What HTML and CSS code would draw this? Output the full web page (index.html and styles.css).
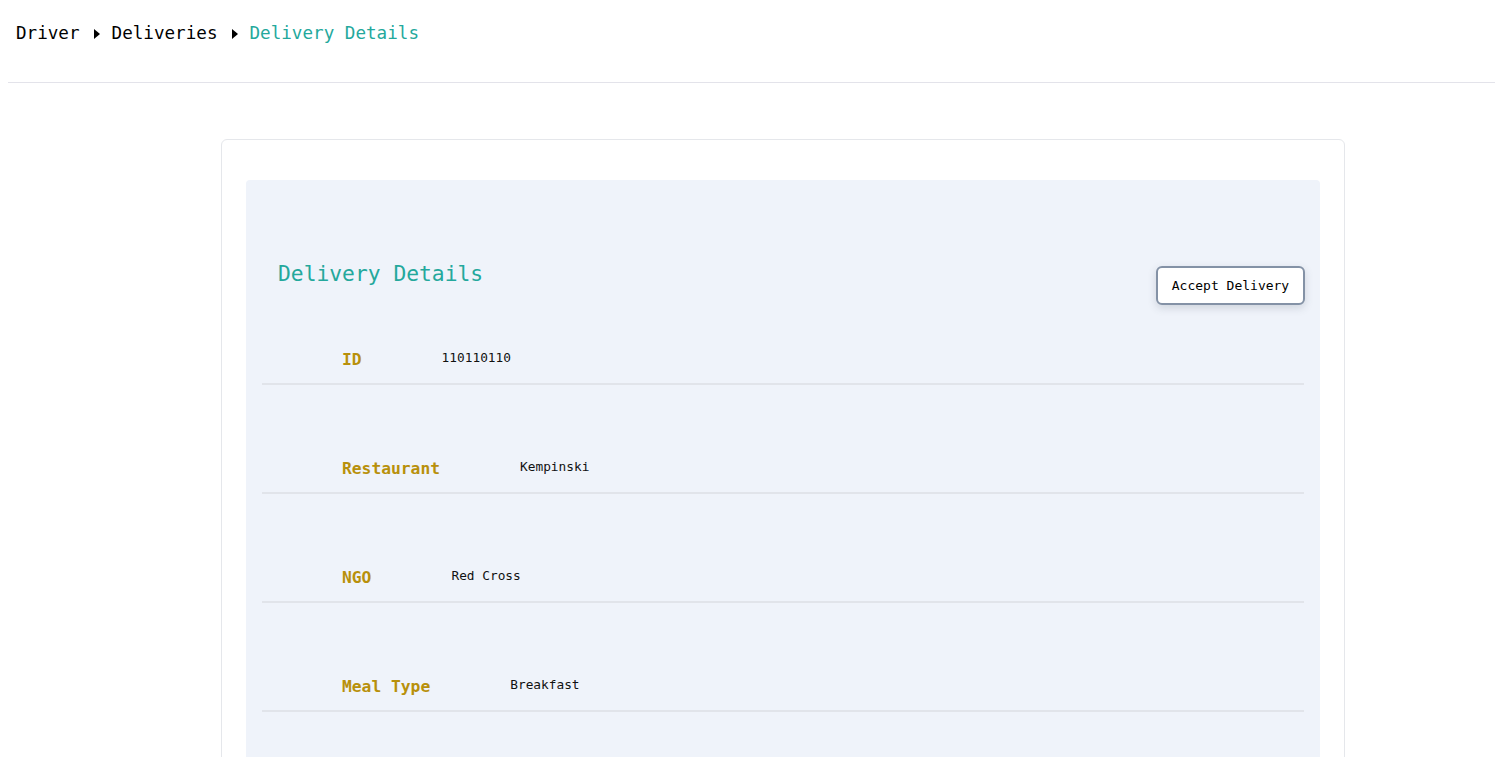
FILE: index.html
```html
<!DOCTYPE html>
<html lang="en">
<head>
<meta charset="utf-8">
<title>Delivery Details</title>
<link rel="stylesheet" href="styles.css">
</head>
<body>
<header class="topbar">
  <nav class="crumbs">
    <span class="crumb">Driver</span>
    <svg class="caret" width="6" height="10" viewBox="0 0 6 10"><path d="M0 0 L6 5 L0 10 Z" fill="#000"/></svg>
    <span class="crumb">Deliveries</span>
    <svg class="caret" width="6" height="10" viewBox="0 0 6 10"><path d="M0 0 L6 5 L0 10 Z" fill="#000"/></svg>
    <span class="crumb current">Delivery Details</span>
  </nav>
</header>
<main class="main">
  <section class="card">
    <div class="panel">
      <div class="panel-head">
        <h1 class="title">Delivery Details</h1>
        <button class="accept">Accept Delivery</button>
      </div>
      <div class="rows">
        <div class="row"><span class="label">ID</span><span class="value">110110110</span></div>
        <div class="row"><span class="label">Restaurant</span><span class="value">Kempinski</span></div>
        <div class="row"><span class="label">NGO</span><span class="value">Red Cross</span></div>
        <div class="row"><span class="label">Meal Type</span><span class="value">Breakfast</span></div>
      </div>
    </div>
  </section>
</main>
</body>
</html>
```
FILE: styles.css
```css
html, body {
  overflow: hidden;
}
body {
  margin: 8px 0 0 8px;
  font-family: "DejaVu Sans Mono", monospace;
  background: #ffffff;
  color: #000;
}
.topbar {
  padding: 15px 0 38px 8px;
  border-bottom: 1px solid #e3e3ea;
}
.crumbs {
  display: flex;
  align-items: center;
  font-size: 17.6px;
  line-height: 21px;
}
.crumb {
  color: #000;
}
.crumb.current {
  color: #24a89c;
}
.caret {
  display: block;
  margin: 0 12px 0 14px;
  flex: none;
}
.main {
  padding: 56px 0 0 213px;
}
.card {
  border: 1px solid #e5e7eb;
  border-radius: 6px;
  padding: 40px 24px 40px 24px;
  box-sizing: border-box;
  width: 1124px;
}
.panel {
  background: #eff3fa;
  border-radius: 4px;
  padding: 0 16px 60px 16px;
}
.panel-head {
  display: flex;
  justify-content: space-between;
  align-items: flex-start;
}
.title {
  margin: 82px 0 0 16px;
  font-size: 21.3px;
  font-weight: normal;
  line-height: 24px;
  color: #24a89c;
}
.accept {
  margin: 86px -1px 0 0;
  width: 149px;
  height: 39px;
  background: #fff;
  border: 2px solid #8492a6;
  border-radius: 6px;
  box-shadow: 0 3px 8px rgba(60, 70, 90, 0.18);
  font-family: "DejaVu Sans Mono", monospace;
  font-size: 13px;
  color: #000;
  padding: 0;
}
.row {
  display: flex;
  align-items: flex-start;
  padding: 74px 0 14px 80px;
  border-bottom: 2px solid #e1e4ea;
}
.row:first-child {
  padding-top: 45px;
}
.label {
  font-size: 16.3px;
  font-weight: bold;
  line-height: 19px;
  color: #b8900b;
  margin-right: 80px;
}
.value {
  font-size: 12.8px;
  line-height: 15px;
  color: #111;
}
```
